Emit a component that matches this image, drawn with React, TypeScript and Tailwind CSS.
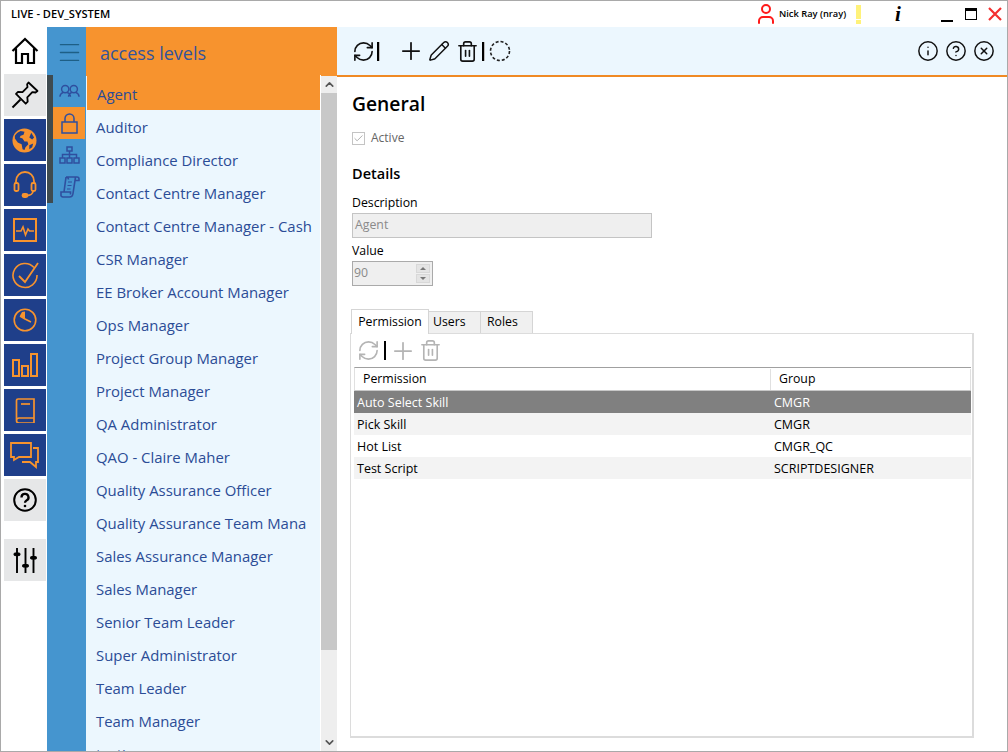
import React from "react";
import { CircleHelp, RefreshCw, Plus, Pencil, Trash2, Info, CircleX, Menu, ChevronUp, ChevronDown, User, Check } from "lucide-react";

const O = "#f7932e";
const B = "#2f4f9f";

function Tile({ children, dark = true }: { children: React.ReactNode; dark?: boolean }) {
  return (
    <div className={`w-[42px] h-[42px] flex items-center justify-center ${dark ? "bg-[#1f3f8a]" : "bg-[#e6e7e8]"}`}>{children}</div>
  );
}

const Home = () => (
  <svg width="30" height="30" viewBox="0 0 30 30" fill="none" stroke="#000" strokeWidth="2.2">
    <path d="M2.500 15 15 3l12.500 12M6 12.500V27h6v-9h6v9h6V12.500" />
  </svg>
);
const PinIcon = () => (
  <svg width="30" height="30" viewBox="0 0 30 30" fill="none" stroke="#000" strokeWidth="1.8" strokeLinejoin="round">
    <path d="M18.500 2.500 27.500 11l-2 1.500-3.200-.4-5 5.200.4 4.400-2 2L6 13.800l2-2 4.500.4 5-5-.4-3z" />
    <path d="m10.500 19.500-8 8" strokeWidth="2" />
  </svg>
);
const Globe = () => (
  <svg width="25" height="25" viewBox="0 0 26 26">
    <circle cx="13" cy="13" r="12.500" fill={O} />
    <path d="M3 8c1-2 3-4 6-5l4 1-1 3-3 1-1 2 3 1 2 3h3l1 3-3 3-1 3-2-1-1-5-4-2-3-4zM20 5l3 5-2 2-3-2zM18 18l4-2-1 4-3 2z" fill="#1f3f8a" />
  </svg>
);
const HeadsetIcon = () => (
  <svg width="24" height="28" viewBox="0 0 24 28" fill="none" stroke={O} strokeWidth="1.800">
    <path d="M3 13v-3a9 9 0 0 1 18 0v3" />
    <rect x="1.500" y="12" width="4" height="8" rx="1.500" />
    <rect x="18.500" y="12" width="4" height="8" rx="1.500" />
    <path d="M20 20c0 3-3 4.500-6 4.500" />
    <rect x="9.500" y="23" width="5" height="3" rx="1.500" fill={O} />
  </svg>
);
const ActivityBox = () => (
  <svg width="26" height="26" viewBox="0 0 26 26" fill="none" stroke={O} strokeWidth="2">
    <rect x="2" y="2" width="22" height="22" />
    <path d="M4 14h5l2-4 2.500 8 2.500-6 1.500 2h4.500" strokeWidth="1.600" />
  </svg>
);
const CheckRing = () => (
  <svg width="30" height="28" viewBox="0 0 30 28" fill="none" stroke={O} strokeWidth="1.600">
    <path d="M24 6.500A12 12 0 1 0 27 14" />
    <path d="M9 15 15 21 28 2" strokeWidth="1.800" />
  </svg>
);
const ClockPie = () => (
  <svg width="24" height="24" viewBox="0 0 24 24" fill="none" stroke={O} strokeWidth="1.600">
    <circle cx="12" cy="12" r="10.800" />
    <path d="M12 11 18 14M12 11 7 8" />
    <path d="M12 11 7 7.500 9 4 12 3.500z" fill={O} stroke="none" />
  </svg>
);
const Bars = () => (
  <svg width="26" height="24" viewBox="0 0 26 24" fill="none" stroke={O} strokeWidth="2">
    <rect x="1" y="7" width="6" height="16" />
    <rect x="10" y="13" width="6" height="10" />
    <rect x="19" y="1" width="6" height="22" />
  </svg>
);
const BookIcon = () => (
  <svg width="20" height="25" viewBox="0 0 20 25" fill="none" stroke={O} strokeWidth="1.700">
    <path d="M2.500 1h16.500v19H4a2.500 2.500 0 0 0 0 5h15v-5M1.500 22V3a2 2 0 0 1 1-2" />
    <path d="M6 6h9" />
  </svg>
);
const Chat = () => (
  <svg width="30" height="27" viewBox="0 0 30 27" fill="none" stroke={O} strokeWidth="1.800">
    <path d="M1 1h20v14H9l-5 3v-3H1z" />
    <path d="M23 6h5v14h-2v5l-6-5h-8" />
  </svg>
);
const HelpIcon = () => (
  <svg width="24" height="24" viewBox="0 0 24 24" fill="none" stroke="#000" strokeWidth="2">
    <circle cx="12" cy="12" r="10.800" />
    <path d="M8.500 9.500a3.500 3.500 0 1 1 5 3c-1 .6-1.500 1-1.500 2.200" strokeWidth="2.300" />
    <circle cx="12" cy="18" r="1.300" fill="#000" stroke="none" />
  </svg>
);
const Sliders = () => (
  <svg width="24" height="25" viewBox="0 0 24 25" stroke="#000" strokeWidth="1.900" fill="#000">
    <path d="M4 0v25M12.500 0v25M20.500 0v25" />
    <rect x="1" y="5" width="6" height="2.600" rx="1" strokeWidth="1" />
    <rect x="9.500" y="16.500" width="6" height="2.600" rx="1" strokeWidth="1" />
    <rect x="17.500" y="8.500" width="6" height="2.600" rx="1" strokeWidth="1" />
  </svg>
);
const UsersIcon = () => (
  <svg width="21" height="14" viewBox="0 0 22 14" fill="none" stroke={B} strokeWidth="1.500">
    <circle cx="6.500" cy="5" r="3.800" />
    <circle cx="15.500" cy="5" r="3.800" />
    <path d="M1 13c0-3 2-4 3.500-4.500M12 13c0-3-1.500-4-3.500-4.500M10 13c0-3 2-4 3.500-4.500M21 13c0-3-2-4-3.500-4.500" />
  </svg>
);
const LockIcon = () => (
  <svg width="17" height="21" viewBox="0 0 17 21" fill="none" stroke={B} strokeWidth="1.500">
    <rect x="1" y="9" width="15" height="11" />
    <path d="M4 9V5.500a4.500 4.500 0 0 1 9 0V9" />
  </svg>
);
const SiteMap = () => (
  <svg width="21" height="18" viewBox="0 0 21 18" fill="none" stroke={B} strokeWidth="1.500">
    <rect x="8" y="1" width="5" height="4" />
    <rect x="1" y="12" width="5" height="5" />
    <rect x="8" y="12" width="5" height="5" />
    <rect x="15" y="12" width="5" height="5" />
    <path d="M10.500 5v7M3.500 12V8.500h14V12" />
  </svg>
);
const ScrollIcon = () => (
  <svg width="20" height="22" viewBox="0 0 20 22" fill="none" stroke={B} strokeWidth="1.600">
    <path d="M6 1h11a2 2 0 0 1 2 2v1.500h-3.500M6 1a2.500 2.500 0 0 1 2.500 2.500v0M15.500 1.200 13 17.500c-.2 2-1.500 3.500-3.500 3.500H3a2 2 0 0 1-2-2.500V16h9.500v2.500M6 1 4 16" />
    <path d="M8 6h4M7.500 9.500h4M7 13h3.500" strokeWidth="1.100" />
  </svg>
);
const Dashed = () => (
  <svg width="22" height="22" viewBox="0 0 22 22" fill="none" stroke="#222" strokeWidth="1.600" strokeDasharray="3 2">
    <circle cx="11" cy="11" r="9.500" />
  </svg>
);
const Sep = () => <div className="w-[3px] h-[19px] bg-[#bdbdbd]"><div className="w-[2px] h-full bg-black" /></div>;

const levels = ["Agent", "Auditor", "Compliance Director", "Contact Centre Manager", "Contact Centre Manager - Cash", "CSR Manager", "EE Broker Account Manager", "Ops Manager", "Project Group Manager", "Project Manager", "QA Administrator", "QAO - Claire Maher", "Quality Assurance Officer", "Quality Assurance Team Mana", "Sales Assurance Manager", "Sales Manager", "Senior Team Leader", "Super Administrator", "Team Leader", "Team Manager", "testing"];
const rows = [["Auto Select Skill", "CMGR"], ["Pick Skill", "CMGR"], ["Hot List", "CMGR_QC"], ["Test Script", "SCRIPTDESIGNER"]];

export default function App() {
  return (
    <div className="w-[1008px] h-[752px] border border-[#a9a9a9] bg-white flex flex-col overflow-hidden text-black" style={{ fontFamily: '"Open Sans", sans-serif' }}>
      <div className="h-[26px] shrink-0 flex items-center">
        <div className="ml-[10px] w-[640px] text-[11.100px] font-semibold whitespace-nowrap">LIVE - DEV_SYSTEM</div>
        <div className="ml-[103px] flex items-center">
          <User size={24} color="#ff1a1a" strokeWidth={2} />
          <span className="ml-[1px] w-[77px] text-[9.300px] font-semibold whitespace-nowrap">Nick Ray (nray)</span>
          <div className="flex flex-col items-center gap-[1px]">
            <div className="w-[5px] h-[14px] bg-[#fff27a]" />
            <div className="w-[5px] h-[4px] bg-[#fff27a]" />
          </div>
          <span className="ml-[34px] w-[10px] text-[21px] leading-none font-bold italic" style={{ fontFamily: '"Liberation Serif", serif' }}>i</span>
          <div className="ml-[36px] w-[12px] h-[2px] bg-black self-end mb-[4px]" />
          <div className="ml-[12px] w-[12px] h-[12px] border border-black border-t-[3px]" />
          <svg className="ml-[11px]" width="14" height="14" viewBox="0 0 14 14" stroke="#f43030" strokeWidth="2.200"><path d="M1 1l12 12M13 1 1 13" /></svg>
        </div>
      </div>
      <div className="flex-1 flex min-h-0">
        {/* rail */}
        <div className="w-[46px] shrink-0 flex flex-col items-center pl-[1px]">
          <div className="h-[47px] shrink-0 flex items-center justify-center"><Home /></div>
          <div className="flex flex-col gap-[3px]">
            <Tile dark={false}><PinIcon /></Tile>
            <Tile><Globe /></Tile>
            <Tile><HeadsetIcon /></Tile>
            <Tile><ActivityBox /></Tile>
            <Tile><CheckRing /></Tile>
            <Tile><ClockPie /></Tile>
            <Tile><Bars /></Tile>
            <Tile><BookIcon /></Tile>
            <Tile><Chat /></Tile>
            <Tile dark={false}><HelpIcon /></Tile>
          </div>
          <div className="mt-[18px]"><Tile dark={false}><Sliders /></Tile></div>
        </div>
        {/* blue column */}
        <div className="w-[39px] shrink-0 bg-[#4595cf] relative">
          <div className="absolute left-0 top-[48px] w-[6px] h-[128px] bg-[#3f4b50]" />
          <div className="h-[48px] flex items-center justify-center pl-[6px] pt-[2px]"><Menu size={27} color="#1e5f86" strokeWidth={1.3} /></div>
          <div className="h-[32px] flex items-center justify-center pl-[6px]"><UsersIcon /></div>
          <div className="h-[32px] ml-[6px] mr-[1px] bg-[#f7932e] flex items-center justify-center"><LockIcon /></div>
          <div className="h-[32px] flex items-center justify-center pl-[6px]"><SiteMap /></div>
          <div className="h-[32px] flex items-center justify-center pl-[6px]"><ScrollIcon /></div>
        </div>
        {/* list */}
        <div className="w-[251px] shrink-0 flex flex-col bg-[#ecf7fe] min-h-0">
          <div className="h-[49px] shrink-0 bg-[#f7932e] pl-[14px] pt-[10px] text-[18px] leading-[32px] text-[#33549b]">access levels</div>
          <div className="flex-1 flex min-h-0">
            <div className="flex-1 overflow-hidden border-r border-white pt-[2px] -mt-[1px]">
              {levels.map((l, i) => (
                <div key={l} className={`h-[33px] shrink-0 pl-[10px] pt-[2px] flex items-center text-[14.900px] text-[#2b4c96] whitespace-nowrap overflow-hidden ${i === 0 ? "bg-[#f7932e] ml-[1px] pl-[9px] -mt-[1px] h-[34px]" : ""}`}>{l}</div>
              ))}
            </div>
            <div className="w-[16px] shrink-0 bg-[#eeeeee] flex flex-col">
              <div className="h-[17px] flex items-center justify-center"><ChevronUp size={13} color="#555" strokeWidth={3} /></div>
              <div className="h-[557px] bg-[#c8c8c8]" />
              <div className="flex-1 flex items-end justify-center pb-[2px]"><ChevronDown size={13} color="#555" strokeWidth={3} /></div>
            </div>
          </div>
        </div>
        {/* main */}
        <div className="flex-1 min-w-0 flex flex-col">
          <div className="h-[50px] shrink-0 bg-[#ecf7fe] border-b-2 border-[#f08a24] flex items-center pl-[15px] pr-[12px]">
            <RefreshCw size={23} color="#111" strokeWidth={1.7} />
            <div className="ml-[2px]"><Sep /></div>
            <div className="ml-[17px]"><Plus size={28} color="#111" strokeWidth={1.5} /></div>
            <div className="ml-[3px]"><Pencil size={22} color="#111" strokeWidth={1.6} /></div>
            <div className="ml-[6px]"><Trash2 size={23} color="#111" strokeWidth={1.7} /></div>
            <div className="ml-[3px]"><Sep /></div>
            <div className="ml-[4px]"><Dashed /></div>
            <div className="ml-auto flex gap-[6px]">
              <Info size={22} color="#111" strokeWidth={1.6} />
              <CircleHelp size={22} color="#111" strokeWidth={1.6} />
              <CircleX size={22} color="#111" strokeWidth={1.6} />
            </div>
          </div>
          <div className="flex-1 pl-[15px] pt-[11px] flex flex-col min-h-0">
            <div className="text-[19.300px] font-semibold leading-[32px]">General</div>
            <div className="mt-[8px] h-[20px] flex items-center">
              <div className="w-[13px] h-[13px] border border-[#c4c4c4] flex items-center justify-center"><Check size={11} color="#a8a8a8" strokeWidth={2} /></div>
              <span className="ml-[6px] text-[12px] text-[#666]">Active</span>
            </div>
            <div className="mt-[16px] text-[14.500px] font-semibold leading-[20px]">Details</div>
            <div className="mt-[10px] text-[12.300px] leading-[18px]">Description</div>
            <div className="mt-[1px] w-[300px] h-[25px] bg-[#efefef] border border-[#c4c4c4] pl-[2px] flex items-center text-[12.300px] text-[#8a8a8a]">Agent</div>
            <div className="mt-[3px] text-[12.300px] leading-[20px]">Value</div>
            <div className="w-[81px] h-[25px] bg-[#efefef] border border-[#aaa] pl-[1px] flex items-center justify-between text-[12.300px] text-[#8a8a8a]">
              <span>90</span>
              <div className="w-[14px] mr-[2px] flex flex-col gap-[1px]">
                <div className="h-[9px] bg-[#e4e4e4] border border-[#d8d8d8] flex items-center justify-center"><div className="border-x-[3px] border-x-transparent border-b-[3px] border-b-[#777]" /></div>
                <div className="h-[9px] bg-[#e4e4e4] border border-[#d8d8d8] flex items-center justify-center"><div className="border-x-[3px] border-x-transparent border-t-[3px] border-t-[#777]" /></div>
              </div>
            </div>
            <div className="mt-[23px] -ml-[1px] flex items-end h-[25px] relative z-10">
              <div className="w-[78px] h-[25px] border border-b-0 border-[#d5d5d5] bg-white text-[12.300px] flex items-center justify-center">Permission</div>
              <div className="w-[52px] h-[22px] border-r border-t border-[#d5d5d5] bg-[#f0f0f0] mb-[1px] text-[12.300px] flex items-center pl-[4px]">Users</div>
              <div className="w-[52px] h-[22px] border-r border-t border-[#d5d5d5] bg-[#f0f0f0] mb-[1px] text-[12.300px] flex items-center pl-[6px]">Roles</div>
            </div>
            <div className="-ml-[2px] -mt-[1px] w-[624px] h-[405px] border-2 border-[#dcdcdc] border-l border-t px-[3px] pt-[6px]">
              <div className="h-[21px] flex items-center pl-[3px]">
                <RefreshCw size={23} color="#b4b4b4" strokeWidth={1.7} />
                <div className="ml-[4px] w-[2px] h-[19px] bg-black" />
                <div className="ml-[3px]"><Plus size={28} color="#b4b4b4" strokeWidth={1.5} /></div>
                <div className="ml-[2px]"><Trash2 size={23} color="#b4b4b4" strokeWidth={1.7} /></div>
              </div>
              <div className="mt-[6px] w-[617px]">
                <div className="h-[24px] pt-[1px] border-t border-t-[#a0a0a0] border-l border-l-[#e0e0e0] border-b-[1px] border-b-[#c8c8c8] flex text-[12.300px]">
                  <div className="w-[416px] pl-[8px] flex items-center border-r border-[#e0e0e0]">Permission</div>
                  <div className="flex-1 pl-[8px] flex items-center border-r border-[#e0e0e0]">Group</div>
                </div>
                {rows.map((r, i) => (
                  <div key={r[0]} className={`h-[22px] pt-[3px] flex items-center text-[12.500px] ${i === 0 ? "bg-[#808080] text-white" : i % 2 ? "bg-[#f3f3f3]" : "bg-white"}`}>
                    <div className="w-[420px] pl-[3px]">{r[0]}</div>
                    <div>{r[1]}</div>
                  </div>
                ))}
              </div>
            </div>
          </div>
        </div>
      </div>
    </div>
  );
}
